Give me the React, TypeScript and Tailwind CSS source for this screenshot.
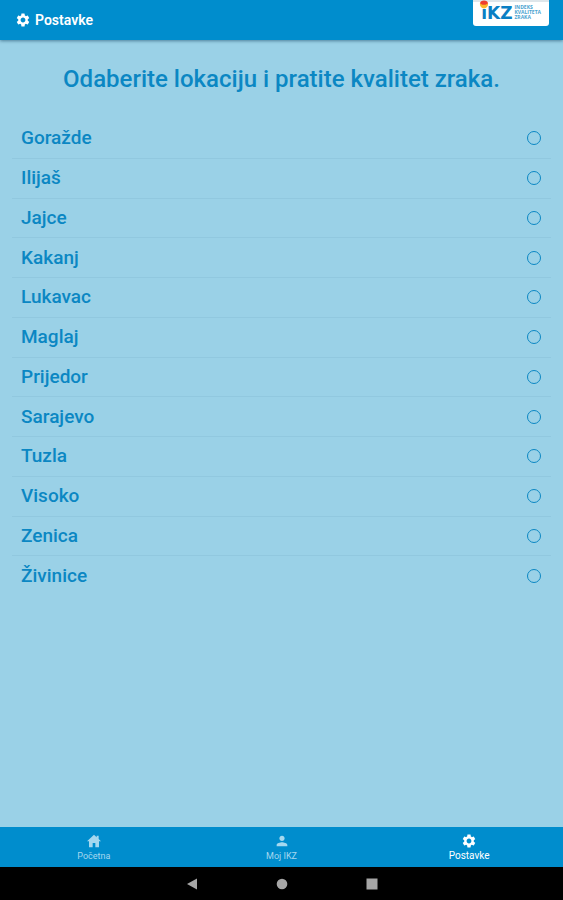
import React, { useState } from 'react';
import { MdPerson, MdSettings } from 'react-icons/md';

interface IconProps {
  size?: number;
}

const cities = [
  'Goražde',
  'Ilijaš',
  'Jajce',
  'Kakanj',
  'Lukavac',
  'Maglaj',
  'Prijedor',
  'Sarajevo',
  'Tuzla',
  'Visoko',
  'Zenica',
  'Živinice',
];

// Solid house with a chimney on the right
const HomeIcon: React.FC<IconProps> = ({ size = 16 }) => (
  <svg viewBox="0 0 24 24" width={size} height={size} fill="currentColor">
    <path d="M12 2.5L1.5 12.2H4.5V21.5H10V15H14V21.5H19.5V12.2H22.5L19 9V4H16V6.2Z" />
  </svg>
);

const tabs = [
  { icon: HomeIcon, label: 'Početna', href: '#pocetna' },
  { icon: MdPerson, label: 'Moj IKZ', href: '#moj-ikz' },
  { icon: MdSettings, label: 'Postavke', href: '#postavke', active: true },
];

const Logo: React.FC = () => (
  <div className="flex h-[26px] items-start gap-0.5 rounded-b-[3px] border-t-2 border-[#dfe6ea] bg-white pr-2 pl-2">
    <div className="relative font-['DejaVu_Sans',sans-serif] text-[17px] leading-[22px] font-bold text-[#0a7fc4]">
      iKZ
      {/* Flame over the dot of the i */}
      <svg viewBox="0 0 10 10" className="absolute -top-0.5 -left-0.5 h-2.5 w-2.5">
        <rect y="3" width="9" height="6" fill="#fff" />
        <path d="M1 3.5C1 1.6 2.8 0.6 5 0.6S9 1.6 9 3.5L7.4 6H2.6Z" fill="#ee3f2d" />
        <path d="M1 3C1.6 4 2.8 4.8 5 4.8S8.4 4 9 3C9.6 6 7.4 8.4 5 8.4S0.4 6 1 3Z" fill="#fbb829" />
      </svg>
    </div>
    <div className="pt-[3px] font-['Open_Sans',sans-serif] text-[5px] leading-[5px] font-bold text-[#4aa3d0]">
      INDEKS
      <br />
      KVALITETA
      <br />
      ZRAKA
    </div>
  </div>
);

const App: React.FC = () => {
  const [selected, setSelected] = useState<string | null>(null);

  return (
    <div className="flex min-h-screen flex-col bg-[#9ad1e7] font-[Roboto,sans-serif]">
      <header className="flex h-10 items-start justify-between bg-[#008dcd] pr-3.5 pl-[15px] shadow-[0_1px_3px_rgba(0,50,80,0.5)]">
        <div className="flex h-10 items-center gap-1 text-white">
          <MdSettings size={16} />
          <h1 className="text-sm font-semibold">Postavke</h1>
        </div>
        <Logo />
      </header>

      <main className="flex-1 px-3 pt-[23px]">
        <h2 id="location-title" className="text-center text-2xl leading-8 font-medium text-[#0b87c3]">
          Odaberite lokaciju i pratite kvalitet zraka.
        </h2>

        <div
          role="radiogroup"
          aria-labelledby="location-title"
          className="mt-6 grid min-h-[477px] auto-rows-fr divide-y divide-[#91c8df]"
        >
          {cities.map((city) => (
            <label
              key={city}
              className="flex cursor-pointer items-center justify-between pr-2.5 pl-[9px] text-[19px] leading-7 font-medium text-[#0b87c3]"
            >
              {city}
              <input
                type="radio"
                name="city"
                value={city}
                checked={selected === city}
                onChange={() => setSelected(city)}
                className="h-3.5 w-3.5 appearance-none rounded-full border border-[#0b87c3] checked:border-4"
              />
            </label>
          ))}
        </div>
      </main>

      <nav className="flex h-10 bg-[#008dcd]">
        {tabs.map((tab) => (
          <a
            key={tab.label}
            href={tab.href}
            className={`flex flex-1 flex-col items-center justify-center pt-0.5 leading-[14px] ${
              tab.active ? 'text-[10px] text-white' : 'text-[9px] text-[#a5d8ef]'
            }`}
          >
            <tab.icon size={16} />
            {tab.label}
          </a>
        ))}
      </nav>

      {/* System navigation bar */}
      <div className="flex h-[33px] items-center justify-center gap-[78px] bg-black text-[#a6a6a6]">
        <button aria-label="Nazad">
          <svg viewBox="0 0 12 12" className="h-3 w-3" fill="currentColor">
            <path d="M11 0.5V11.5L1 6Z" />
          </svg>
        </button>
        <button aria-label="Početni ekran">
          <svg viewBox="0 0 12 12" className="h-3 w-3" fill="currentColor">
            <circle cx="6" cy="6" r="5.3" />
          </svg>
        </button>
        <button aria-label="Nedavne aplikacije">
          <svg viewBox="0 0 12 12" className="h-3 w-3" fill="currentColor">
            <rect x="0.5" y="0.5" width="11" height="11" />
          </svg>
        </button>
      </div>
    </div>
  );
};

export default App;
